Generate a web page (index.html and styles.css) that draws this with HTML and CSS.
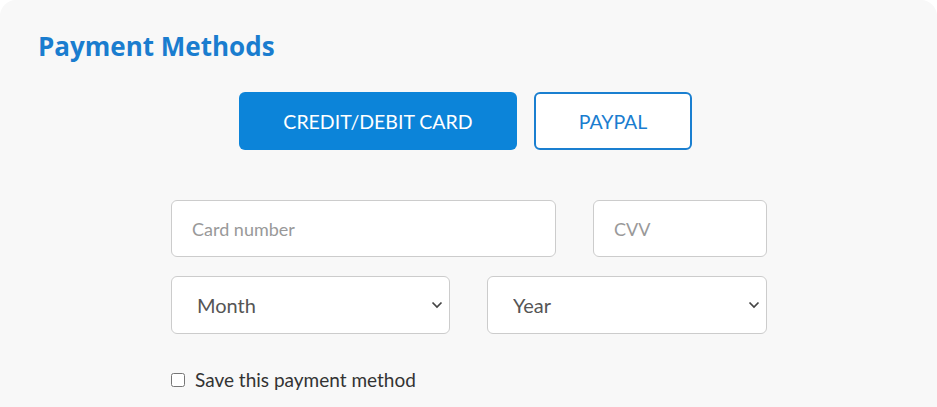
FILE: index.html
```html
<!DOCTYPE html>
<html>
<head>
    <title>Payment Methods</title>
    <link rel="stylesheet" href="styles.css">
</head>
<body>
    <div class="card">
        <h2 class="title">Payment Methods</h2>
        <div class="tabs">
            <button class="tab active">CREDIT/DEBIT CARD</button>
            <button class="tab outline">PAYPAL</button>
        </div>
        <form class="payForm">
            <div class="row">
                <input class="field number" type="text" placeholder="Card number">
                <input class="field cvv" type="text" placeholder="CVV">
            </div>
            <div class="row">
                <div class="selectWrap month">
                    <select class="field pick">
                        <option>Month</option>
                    </select>
                    <svg class="chev" width="12" height="8" viewBox="0 0 12 8"><path d="M1.5 1.5 L6 6 L10.5 1.5" fill="none" stroke="#444" stroke-width="1.7"/></svg>
                </div>
                <div class="selectWrap">
                    <select class="field pick">
                        <option>Year</option>
                    </select>
                    <svg class="chev" width="12" height="8" viewBox="0 0 12 8"><path d="M1.5 1.5 L6 6 L10.5 1.5" fill="none" stroke="#444" stroke-width="1.7"/></svg>
                </div>
            </div>
            <label class="save">
                <input type="checkbox" class="box">
                Save this payment method
            </label>
        </form>
    </div>
</body>
</html>
```

FILE: styles.css
```css
body {
    margin: 0;
    background-color: #ffffff;
    font-family: Lato, "Open Sans", sans-serif;
}
.card {
    background-color: #f8f8f8;
    border-radius: 16px 16px 0 0;
    height: 407px;
    padding: 28px 38px 0;
    box-sizing: border-box;
}
.title {
    margin: 0;
    font-family: "Open Sans", sans-serif;
    font-weight: 700;
    font-size: 26px;
    line-height: 36px;
    color: #1a7dcf;
}
.tabs {
    display: flex;
    justify-content: center;
    gap: 17px;
    margin-top: 28px;
    padding-right: 6px;
}
.tab {
    height: 58px;
    border-radius: 6px;
    font-family: Lato, sans-serif;
    font-size: 19.5px;
    cursor: pointer;
}
.tab.active {
    width: 278px;
    background-color: #0c84d9;
    border: none;
    color: #ffffff;
}
.tab.outline {
    width: 158px;
    background-color: #ffffff;
    border: 2px solid #1a7fd0;
    color: #1a7dcf;
}
.payForm {
    width: 596px;
    margin: 50px auto 0;
    padding-left: 1px;
    display: flex;
    flex-direction: column;
    gap: 19px;
}
.row {
    display: flex;
    gap: 37px;
}
.field {
    height: 57px;
    box-sizing: border-box;
    border: 1px solid #cccccc;
    border-radius: 6px;
    background-color: #ffffff;
    font-family: Lato, sans-serif;
    font-size: 18px;
    padding: 0 20px;
    color: #555555;
}
.field::placeholder {
    color: #999999;
}
.number {
    width: 385px;
}
.cvv {
    width: 174px;
}
.selectWrap {
    position: relative;
    width: 280px;
}
.selectWrap.month {
    width: 279px;
}
.pick {
    width: 100%;
    height: 58px;
    appearance: none;
    font-size: 20px;
    padding-left: 25px;
}
.chev {
    position: absolute;
    right: 7px;
    top: 25px;
    pointer-events: none;
}
.save {
    display: flex;
    align-items: center;
    gap: 10px;
    margin-top: 15px;
    font-size: 19px;
    color: #333333;
}
.box {
    margin: 0;
    width: 14px;
    height: 14px;
}
```
